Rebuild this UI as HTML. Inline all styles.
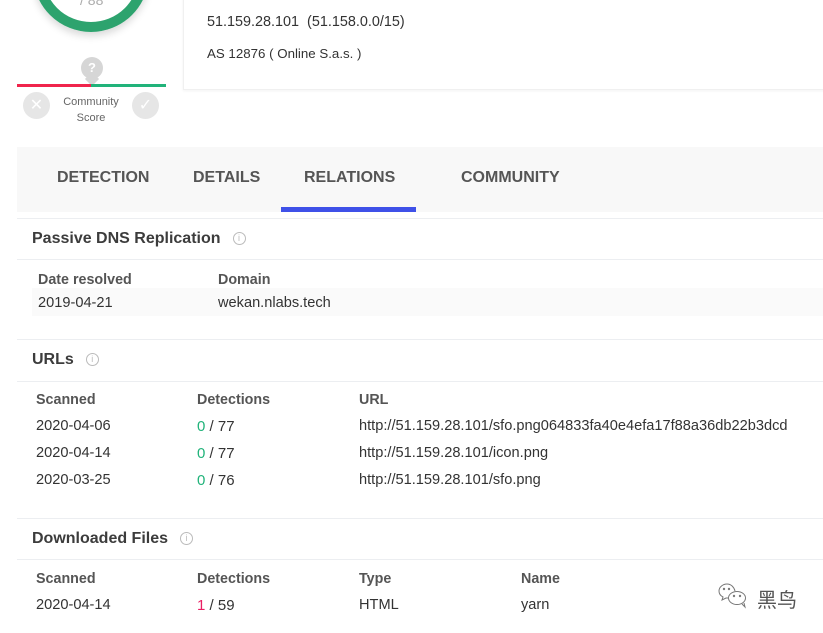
<!DOCTYPE html>
<html><head><meta charset="utf-8"><style>
body{margin:0;width:823px;height:633px;background:#fff;font-family:"Liberation Sans",Arial,sans-serif;color:#333;position:relative;overflow:hidden}
.a{position:absolute;white-space:nowrap}
.hr{position:absolute;left:17px;right:0;height:1px;background:#eceef1}
.h{font-size:16px;font-weight:bold;color:#3c3c3c}
.th{font-size:14.3px;font-weight:bold;color:#555}
.td{font-size:14.6px;color:#333}
.info{display:inline-block;width:11px;height:11px;border:1px solid #bbb;border-radius:50%;font-size:9px;color:#bbb;text-align:center;line-height:11px;vertical-align:2px;margin-left:12px;font-weight:normal}
.tab{font-size:16px;font-weight:bold;color:#555;top:169px}
.g{color:#21b37a}.r{color:#e91e63}
</style></head><body>
<div class="a" style="left:33px;top:-84px;width:96px;height:96px;border:10px solid #2da36e;border-radius:50%;box-shadow:0 4px 8px rgba(0,0,0,.15)"></div>
<div class="a" style="left:80px;top:-8px;font-size:14px;color:#aaa">/ 88</div>
<div class="a" style="left:81px;top:57px;width:22px;height:22px;border-radius:50%;background:#d6d6d6;color:#fff;font-weight:bold;font-size:13px;text-align:center;line-height:22px">?</div>
<div class="a" style="left:87px;top:74px;width:10px;height:10px;background:#d6d6d6;transform:rotate(45deg)"></div>
<div class="a" style="left:17px;top:84px;width:74px;height:3px;background:#f0244c"></div>
<div class="a" style="left:91px;top:84px;width:75px;height:3px;background:#21b37a"></div>
<div class="a" style="left:23px;top:92px;width:27px;height:27px;border-radius:50%;background:#e6e6e6;color:#fff;text-align:center;line-height:27px;font-size:16px">✕</div>
<div class="a" style="left:132px;top:92px;width:27px;height:27px;border-radius:50%;background:#e6e6e6;color:#fff;text-align:center;line-height:27px;font-size:16px">✓</div>
<div class="a" style="left:55px;top:94px;width:72px;text-align:center;font-size:11px;color:#666;line-height:16px">Community<br>Score</div>
<div class="a" style="left:183px;top:-5px;width:650px;height:93px;border:1px solid #f0f0f0;box-shadow:0 1px 3px rgba(0,0,0,.05)"></div>
<div class="a" style="left:207px;top:14px;font-size:14.4px;color:#333">51.159.28.101 &nbsp;(51.158.0.0/15)</div>
<div class="a" style="left:207px;top:46px;font-size:13.3px;color:#333">AS 12876 ( Online S.a.s. )</div>
<div class="a" style="left:17px;top:147px;width:806px;height:65px;background:#f8f8f8"></div>
<div class="a tab" style="left:57px">DETECTION</div>
<div class="a tab" style="left:193px">DETAILS</div>
<div class="a tab" style="left:304px">RELATIONS</div>
<div class="a tab" style="left:461px">COMMUNITY</div>
<div class="a" style="left:281px;top:207px;width:135px;height:5px;background:#3f51e8"></div>
<div class="hr" style="top:218px"></div>
<div class="a h" style="left:32px;top:230px">Passive DNS Replication<span class="info">i</span></div>
<div class="hr" style="top:259px"></div>
<div class="a th" style="left:38px;top:272px">Date resolved</div>
<div class="a th" style="left:218px;top:272px">Domain</div>
<div class="a" style="left:32px;top:288px;right:0;height:28px;background:#fafafa"></div>
<div class="a td" style="left:38px;top:295px">2019-04-21</div>
<div class="a td" style="left:218px;top:295px">wekan.nlabs.tech</div>
<div class="hr" style="top:339px"></div>
<div class="a h" style="left:32px;top:351px">URLs<span class="info">i</span></div>
<div class="hr" style="top:381px"></div>
<div class="a th" style="left:36px;top:392px">Scanned</div>
<div class="a th" style="left:197px;top:392px">Detections</div>
<div class="a th" style="left:359px;top:392px">URL</div>
<div class="a td" style="left:36px;top:418px">2020-04-06</div><div class="a td" style="left:197px;top:418px;font-size:15px"><span class="g">0</span> / 77</div><div class="a td" style="left:359px;top:418px">http://51.159.28.101/sfo.png064833fa40e4efa17f88a36db22b3dcd</div>
<div class="a td" style="left:36px;top:445px">2020-04-14</div><div class="a td" style="left:197px;top:445px;font-size:15px"><span class="g">0</span> / 77</div><div class="a td" style="left:359px;top:445px">http://51.159.28.101/icon.png</div>
<div class="a td" style="left:36px;top:472px">2020-03-25</div><div class="a td" style="left:197px;top:472px;font-size:15px"><span class="g">0</span> / 76</div><div class="a td" style="left:359px;top:472px">http://51.159.28.101/sfo.png</div>
<div class="hr" style="top:518px"></div>
<div class="a h" style="left:32px;top:530px">Downloaded Files<span class="info">i</span></div>
<div class="hr" style="top:559px"></div>
<div class="a th" style="left:36px;top:571px">Scanned</div>
<div class="a th" style="left:197px;top:571px">Detections</div>
<div class="a th" style="left:359px;top:571px">Type</div>
<div class="a th" style="left:521px;top:571px">Name</div>
<div class="a td" style="left:36px;top:597px">2020-04-14</div><div class="a td" style="left:197px;top:597px;font-size:15px"><span class="r">1</span> / 59</div><div class="a td" style="left:359px;top:597px">HTML</div><div class="a td" style="left:521px;top:597px">yarn</div>
<svg class="a" style="left:718px;top:582px" width="34" height="30" viewBox="0 0 34 30" fill="none" stroke="#777" stroke-width="1"><path d="M17 9C16 5 13 2 9 2 5 2 1 5 1 9c0 3 2 5 4 6l-1 3 4-2c1 0 2 0 3 0"/><ellipse cx="19" cy="16" rx="8.5" ry="6.5"/><path d="M24 22l3 3-1-4"/><circle cx="6" cy="7" r=".7"/><circle cx="11" cy="7" r=".7"/><circle cx="16" cy="14" r=".7"/><circle cx="22" cy="14" r=".7"/></svg>
<div class="a" style="left:757px;top:584px;font-size:20px;color:#555;font-family:'Liberation Sans','Noto Sans CJK SC',sans-serif">黑鸟</div>
</body></html>
